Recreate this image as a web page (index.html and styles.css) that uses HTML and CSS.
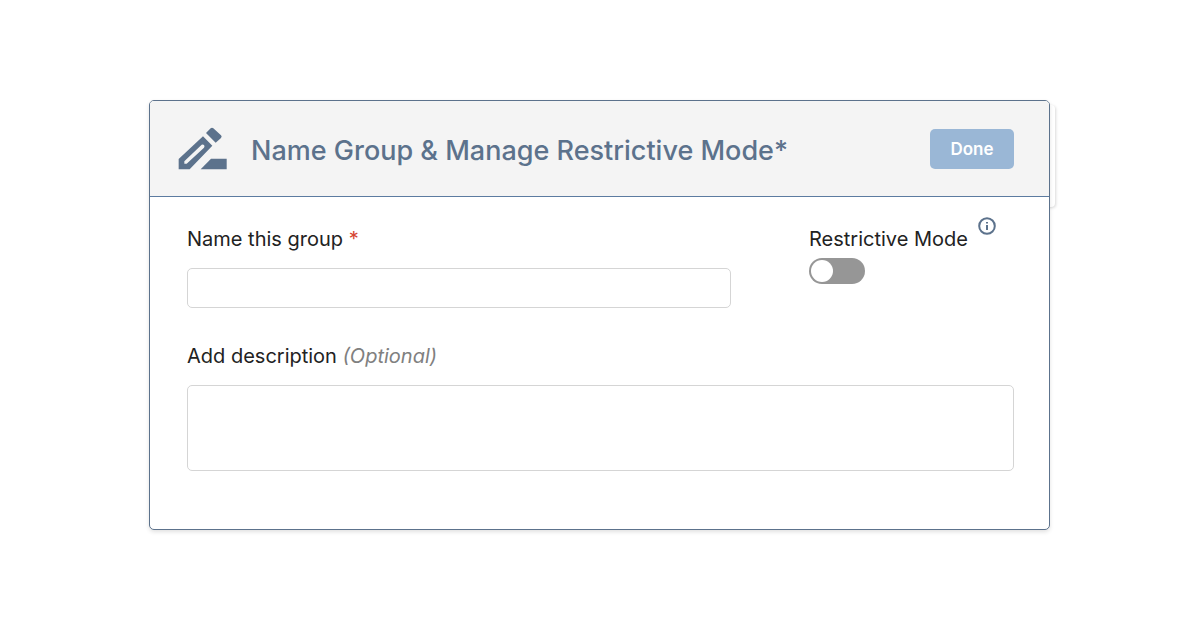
FILE: index.html
```html
<!DOCTYPE html>
<html lang="en">
<head>
    <meta charset="UTF-8">
    <meta name="viewport" content="width=device-width, initial-scale=1.0">
    <title>Name Group</title>
    <link rel="stylesheet" href="styles.css">
</head>
<body>
    <form class="card">
        <header class="card-header">
            <svg class="edit-icon" viewBox="0 0 147 129" aria-hidden="true">
                <path fill-rule="evenodd" d="M2 96 L75 28 L103 56 L35 127 H2 Z M19 103 V110 H26 L78 62 Q81 57 78 54 Q75 51 71 53 Z"/>
                <path d="M84 18 L98 4 Q102 0 106 4 L129 25 Q133 29 129 33 L113 47 Z"/>
                <path d="M68 127 L99 95 H146 V127 Z"/>
            </svg>
            <h1>Name Group &amp; Manage Restrictive Mode*</h1>
            <button class="button-done" type="button">Done</button>
        </header>

        <div class="card-body">
            <div class="row">
                <div class="field field-name">
                    <label for="groupName">Name this group <span class="required">*</span></label>
                    <input class="text-box" type="text" id="groupName">
                </div>
                <div class="mode">
                    <div class="mode-label">
                        <label for="restrictive">Restrictive Mode</label>
                        <svg class="info-icon" viewBox="0 0 18 18" aria-hidden="true">
                            <circle cx="9" cy="9" r="7.8"/>
                            <path d="M9 8 V13 M9 5 V6.6"/>
                        </svg>
                    </div>
                    <input class="toggle" type="checkbox" id="restrictive">
                </div>
            </div>

            <div class="field">
                <label for="description">Add description <em class="optional">(Optional)</em></label>
                <textarea class="text-box text-area" id="description"></textarea>
            </div>
        </div>
    </form>
</body>
</html>
```

FILE: styles.css
```css
* {
    box-sizing: border-box;
}
body {
    font-family: Inter, 'Liberation Sans', sans-serif;
    font-size: 20px;
    line-height: 24px;
    color: #222;
    background-color: #fff;
    margin: 0;
    padding: 100px 150px 100px 149px;
}
.card {
    position: relative;
    border: 1px solid #5c728c;
    border-radius: 5px;
    box-shadow: 0 2px 4px rgba(0, 0, 0, 0.12);
    background-color: #fff;
}
/* Page edge that shows behind the header */
.card::after {
    content: "";
    position: absolute;
    z-index: -1;
    top: 4px;
    right: -6px;
    width: 12px;
    height: 102px;
    border-radius: 4px;
    background-color: #fff;
    box-shadow: 1px 1px 3px rgba(0, 0, 0, 0.15);
}
.card-header {
    display: flex;
    align-items: center;
    min-height: 96px;
    padding: 0 35px 0 28px;
    border-bottom: 1px solid #5c7ba0;
    border-radius: 4px 4px 0 0;
    background-color: #f4f4f4;
}
.edit-icon {
    flex: none;
    width: 49px;
    height: 43px;
    margin-right: 24px;
    fill: #5c728c;
}
h1 {
    flex: 1;
    margin: 0;
    padding-top: 4px;
    font-size: 27px;
    font-weight: 500;
    line-height: 40px;
    color: #5c728c;
}
.button-done {
    width: 84px;
    height: 40px;
    border: none;
    border-radius: 5px;
    font-family: inherit;
    font-size: 17px;
    font-weight: 600;
    color: #fff;
    background-color: #9ab7d6;
    cursor: pointer;
}
.card-body {
    padding: 30px 35px 58px 37px;
}
.row {
    display: flex;
    gap: 78px;
    margin-bottom: 36px;
}
.field {
    display: flex;
    flex-direction: column;
    gap: 17px;
}
.field-name {
    flex: 1;
}
.required {
    color: #d64533;
}
.optional {
    color: #808080;
}
.text-box {
    width: 100%;
    height: 40px;
    padding: 8px 12px;
    border: 1px solid #d5d5d5;
    border-radius: 5px;
    font: inherit;
    background-color: #fff;
}
.text-area {
    height: 86px;
    resize: none;
}
.mode {
    width: 205px;
}
.mode-label {
    display: flex;
    gap: 10px;
}
.info-icon {
    width: 18px;
    height: 18px;
    margin-top: -10px;
    fill: none;
    stroke: #5c728c;
    stroke-width: 2;
}
.toggle {
    appearance: none;
    display: flex;
    width: 56px;
    height: 26px;
    margin: 7px 0 0;
    padding: 2px;
    border-radius: 13px;
    background-color: #969696;
    cursor: pointer;
}
.toggle::before {
    content: "";
    width: 22px;
    height: 22px;
    border-radius: 50%;
    background-color: #fff;
}
.toggle:checked {
    justify-content: flex-end;
    background-color: #5c728c;
}
```
